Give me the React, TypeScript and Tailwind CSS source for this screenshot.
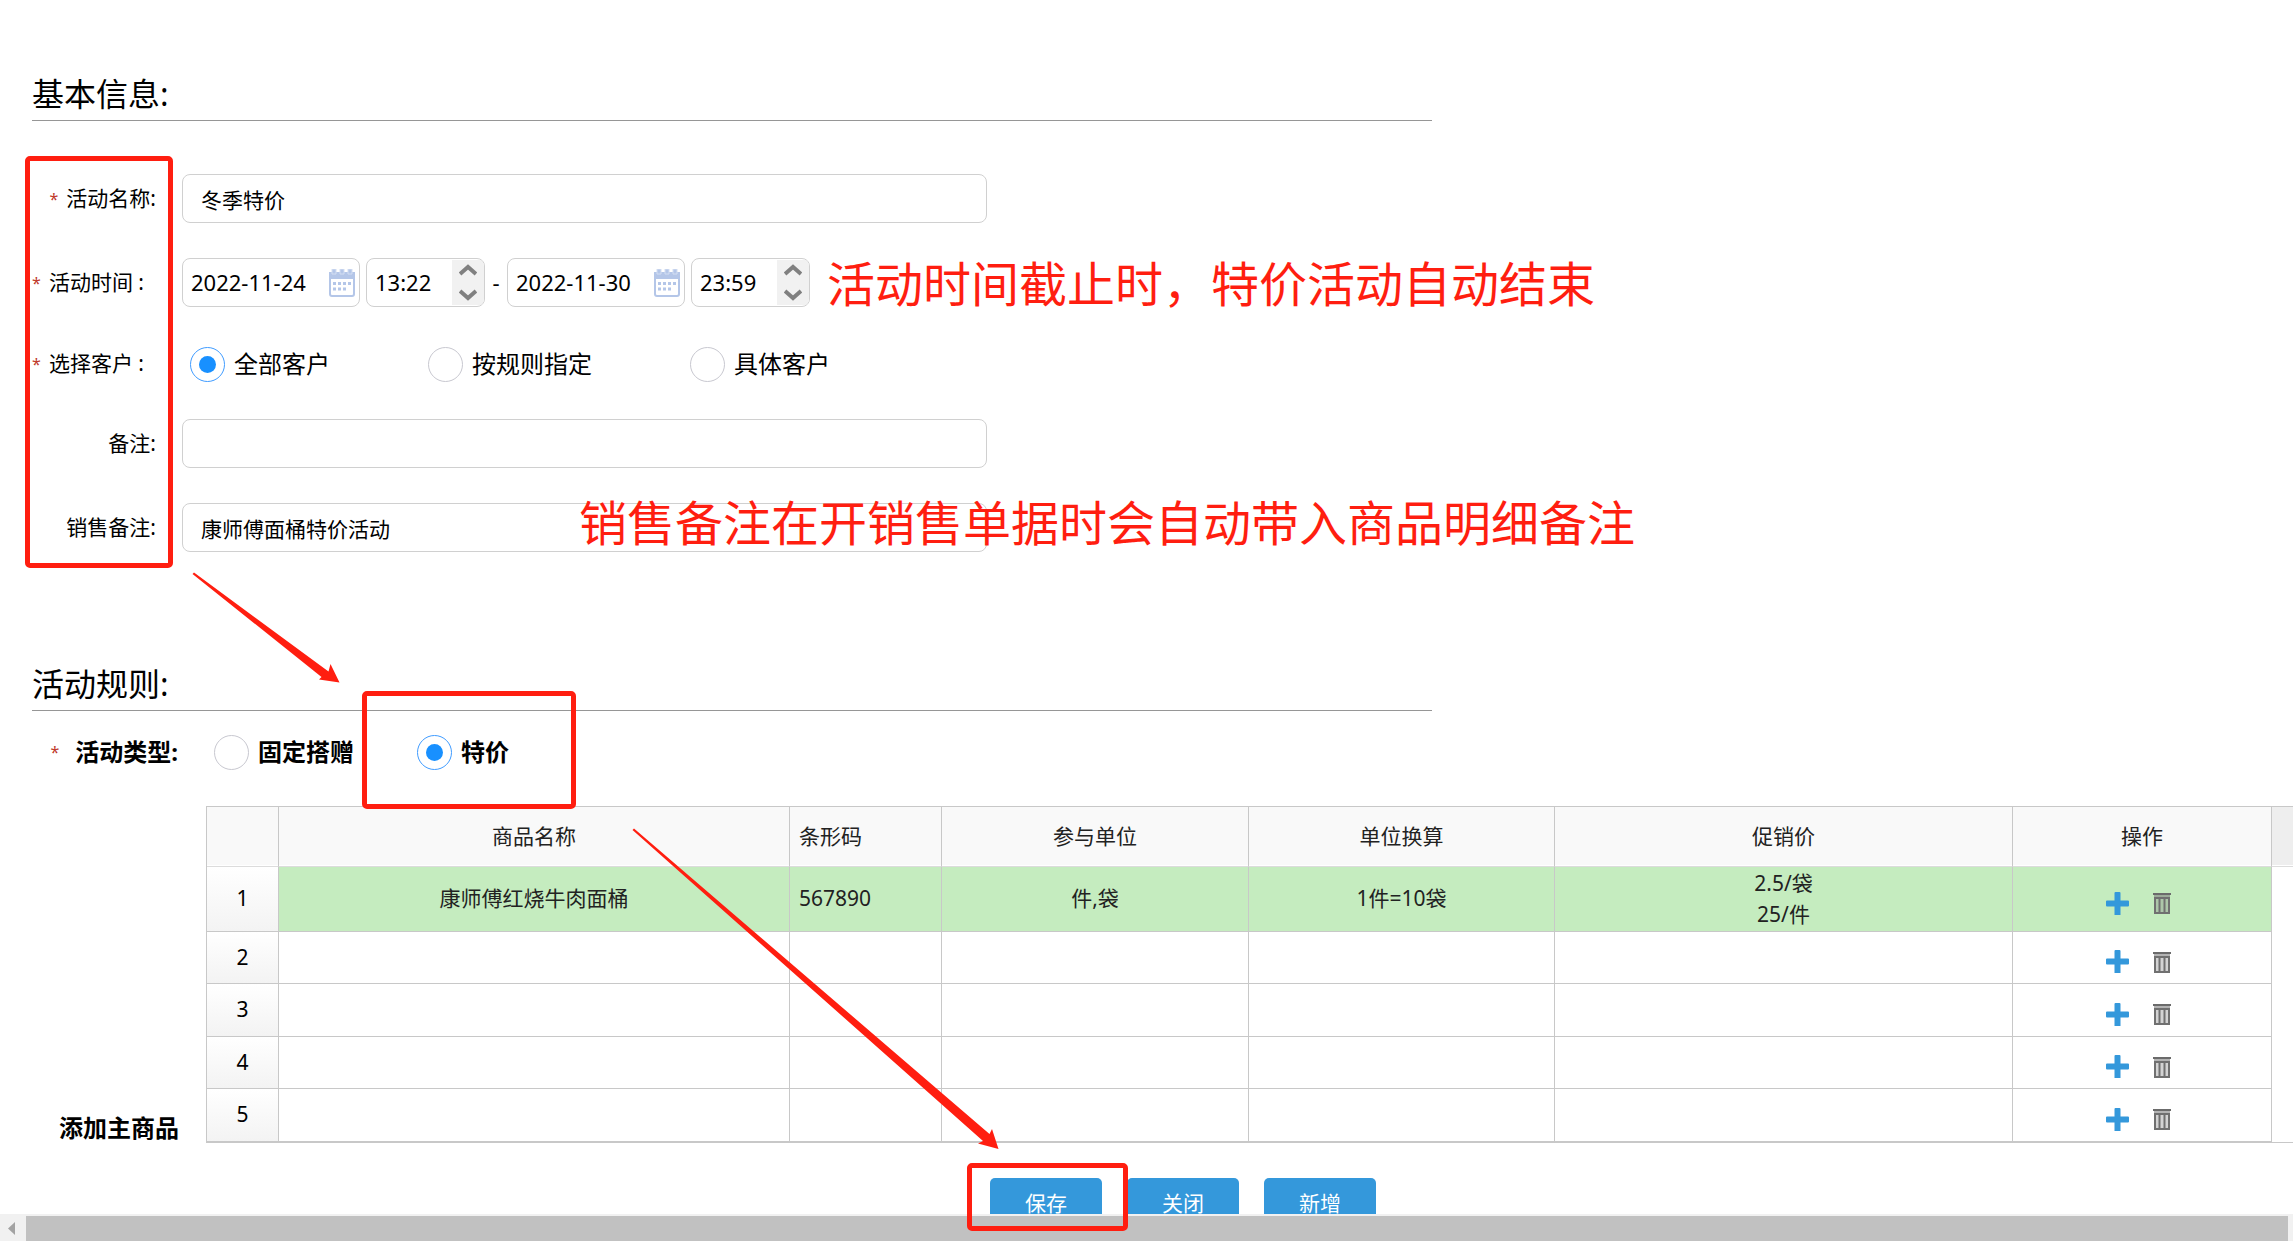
import React, { useState } from 'react';

const customerOptions = ['全部客户', '按规则指定', '具体客户'];

const rows = [
  { name: '康师傅红烧牛肉面桶', barcode: '567890', units: '件,袋', conversion: '1件=10袋', prices: ['2.5/袋', '25/件'] },
  { name: '', barcode: '', units: '', conversion: '', prices: [] },
  { name: '', barcode: '', units: '', conversion: '', prices: [] },
  { name: '', barcode: '', units: '', conversion: '', prices: [] },
  { name: '', barcode: '', units: '', conversion: '', prices: [] },
];

const fieldClass = 'h-[49px] rounded-lg border border-[#d0d0d0] bg-white outline-none';
const radioClass =
  'grid size-[35px] shrink-0 appearance-none place-items-center rounded-full border border-[#c8c8d0] bg-white before:size-[17px] before:rounded-full checked:border-[#409cff] checked:before:bg-[#1890ff]';
const headClass = 'border-r border-b border-r-[#c8c8c8] border-b-[#dcdcdc] font-normal shadow-[inset_0_-1px_0_#fff]';
const cellClass = 'border-r border-b border-[#c8c8c8] p-0 text-center';

const Star = () => <span className="pr-2 text-base text-[#c0392b]">*</span>;

const SectionTitle = ({ children }: { children: React.ReactNode }) => (
  <h2 className="ml-8 h-[51px] max-w-[1400px] border-b border-[#969696] text-[32px] leading-[48px]">{children}</h2>
);

const FieldLabel = ({ id, text, required }: { id: string; text: string; required?: boolean }) => (
  <label htmlFor={id} className="flex w-[182px] shrink-0 items-center justify-end pr-[26px]">
    {required && <Star />}
    {text}
  </label>
);

const CalendarIcon = () => (
  <svg width="26" height="28" viewBox="0 0 26 28">
    <rect x="1" y="5" width="24" height="22" rx="2" fill="#fff" stroke="#b4c6e8" strokeWidth="2" />
    <path d="M0 3h26v7H0z" fill="#b4c6e8" />
    <path d="M3 0h4v5H3zM11 0h4v5h-4zM19 0h4v5h-4z" fill="#b4c6e8" stroke="#d3def2" />
    <path d="M4 14.500h18" stroke="#b4c6e8" strokeWidth="3" strokeDasharray="3 2" />
    <path d="M4 20h14" stroke="#b4c6e8" strokeWidth="3" strokeDasharray="3 2" />
  </svg>
);

const DateField = ({ label, value }: { label: string; value: string }) => (
  <div className={`${fieldClass} flex w-[178px] items-center justify-between pr-1 pl-2`}>
    <input aria-label={label} defaultValue={value} className="w-32 text-[22px] outline-none" />
    <button type="button" aria-label={`${label}日历`}>
      <CalendarIcon />
    </button>
  </div>
);

const TimeField = ({ label, value }: { label: string; value: string }) => (
  <div className={`${fieldClass} flex w-[119px] items-center justify-between overflow-hidden pl-2`}>
    <input aria-label={label} defaultValue={value} className="w-16 text-[22px] outline-none" />
    <div className="my-px flex w-8 flex-col items-center justify-between self-stretch bg-[#f1f1f1] py-1">
      <button type="button" aria-label={`${label}增加`}>
        <svg width="18" height="12" viewBox="0 0 18 12">
          <path d="M1 10 9 3l8 7" fill="none" stroke="#808080" strokeWidth="4" />
        </svg>
      </button>
      <button type="button" aria-label={`${label}减少`}>
        <svg width="18" height="12" viewBox="0 0 18 12">
          <path d="M1 2l8 7 8-7" fill="none" stroke="#808080" strokeWidth="4" />
        </svg>
      </button>
    </div>
  </div>
);

const PlusIcon = () => (
  <svg width="23" height="23" viewBox="0 0 23 23">
    <path d="M8.500 1q0-1 1-1h4q1 0 1 1v7.500H22q1 0 1 1v4q0 1-1 1h-7.500V23h-6v-8.500H1q-1 0-1-1v-4q0-1 1-1h7.500z" fill="#3498db" />
  </svg>
);

const TrashIcon = () => (
  <svg width="18" height="22" viewBox="0 0 18 22">
    <path d="M1 2h16v3H1z" fill="#808080" fillOpacity=".6" />
    <path d="M0 1h18v2H0z" fill="#6b6b6b" />
    <path d="M2 6h14v15H2z" fill="#808080" fillOpacity=".35" stroke="#707070" strokeWidth="2" />
    <path d="M6.500 6v15M11.500 6v15" stroke="#707070" strokeWidth="2" />
  </svg>
);

const Annotations = () => (
  <div className="pointer-events-none absolute inset-0 overflow-hidden text-[48px] leading-[72px] whitespace-nowrap text-[#ff1e10]">
    <div className="absolute top-[156px] left-[25px] h-[412px] w-[148px] rounded-[5px] border-5 border-[#ff1e10]" />
    <div className="absolute top-[691px] left-[362px] h-[118px] w-[214px] rounded-[5px] border-5 border-[#ff1e10]" />
    <div className="absolute top-[1163px] left-[967px] h-[68px] w-[161px] rounded-[5px] border-5 border-[#ff1e10]" />
    <p className="absolute top-[248px] left-[827px]">活动时间截止时，特价活动自动结束</p>
    <p className="absolute top-[487px] left-[579px]">销售备注在开销售单据时会自动带入商品明细备注</p>
    <svg className="absolute top-[572px] left-[192px]" width="150" height="112" viewBox="192 572 150 112">
      <path d="M192.500 574 194 572.500 328.500 671.500 330.500 664 339.500 682.500 319 679.500 321.500 677z" fill="#ff1e10" />
    </svg>
    <svg className="absolute top-[828px] left-[632px]" width="368" height="323" viewBox="632 828 368 323">
      <path d="M632.500 830 634 828.500 989.500 1134 992 1129 998.500 1149 978 1143.500 983 1141z" fill="#ff1e10" />
    </svg>
  </div>
);

const App = () => {
  const [customer, setCustomer] = useState('全部客户');
  const [activityType, setActivityType] = useState('特价');

  return (
    <div className="relative flex h-screen flex-col overflow-hidden bg-white font-['Noto_Sans','Noto_Sans_CJK_SC',sans-serif] text-[21px] text-black">
      <main className="min-h-0 flex-1 overflow-hidden pt-[70px]">
        <SectionTitle>基本信息:</SectionTitle>

        <div className="mt-[53px] flex flex-col gap-[35px]">
          <div className="flex">
            <FieldLabel id="name" text="活动名称:" required />
            <input id="name" defaultValue="冬季特价" className={`${fieldClass} w-[805px] px-[18px]`} />
          </div>

          <div className="flex items-center">
            <div className="flex w-[182px] shrink-0 items-center justify-end pr-[38px]">
              <Star />
              活动时间 :
            </div>
            <div className="flex items-center gap-1.5">
              <DateField label="开始日期" value="2022-11-24" />
              <TimeField label="开始时间" value="13:22" />
              <span className="w-[10px] text-center text-[22px]">-</span>
              <DateField label="结束日期" value="2022-11-30" />
              <TimeField label="结束时间" value="23:59" />
            </div>
          </div>

          <div className="flex h-[42px] items-center pt-0.5">
            <div className="flex w-[182px] shrink-0 items-center justify-end pr-[38px]">
              <Star />
              选择客户 :
            </div>
            <div className="flex gap-[98px] pl-2 text-2xl">
              {customerOptions.map((option) => (
                <label key={option} className="flex items-center gap-[9px]">
                  <input
                    type="radio"
                    name="customer"
                    checked={customer === option}
                    onChange={() => setCustomer(option)}
                    className={radioClass}
                  />
                  {option}
                </label>
              ))}
            </div>
          </div>

          <div className="flex">
            <FieldLabel id="remark" text="备注:" />
            <input id="remark" className={`${fieldClass} w-[805px] px-[18px]`} />
          </div>

          <div className="flex">
            <FieldLabel id="saleRemark" text="销售备注:" />
            <input id="saleRemark" defaultValue="康师傅面桶特价活动" className={`${fieldClass} w-[805px] px-[18px]`} />
          </div>
        </div>

        <div className="mt-[108px]">
          <SectionTitle>活动规则:</SectionTitle>
        </div>

        <div className="mb-[13px] flex h-[82px] items-center text-2xl font-bold">
          <div className="flex w-[182px] items-center justify-end pr-1">
            <span className="pr-4 text-base font-normal text-[#c0392b]">*</span>
            活动类型:
          </div>
          <div className="flex gap-[63px] pl-8">
            {['固定搭赠', '特价'].map((type) => (
              <label key={type} className="flex items-center gap-[9px]">
                <input
                  type="radio"
                  name="activityType"
                  checked={activityType === type}
                  onChange={() => setActivityType(type)}
                  className={radioClass}
                />
                {type}
              </label>
            ))}
          </div>
        </div>

        <div className="flex items-end">
          <div className="w-[206px] shrink-0 pr-[27px] text-right text-2xl leading-[30px] font-bold">添加主商品</div>
          <div className="min-w-0 flex-1 border-y border-l border-[#c8c8c8]">
            <table className="w-full table-fixed border-separate border-spacing-0 text-[#222]">
              <colgroup>
                <col className="w-[72px]" />
                <col />
                <col className="w-[152px]" />
                <col className="w-[307px]" />
                <col className="w-[306px]" />
                <col className="w-[458px]" />
                <col className="w-[259px]" />
                <col className="w-[21px]" />
              </colgroup>
              <thead>
                <tr className="h-[60px] bg-[#f9f9f9]">
                  <th className={headClass} />
                  <th className={headClass}>商品名称</th>
                  <th className={`${headClass} pl-[9px] text-left`}>条形码</th>
                  <th className={headClass}>参与单位</th>
                  <th className={headClass}>单位换算</th>
                  <th className={headClass}>促销价</th>
                  <th className={headClass}>操作</th>
                  <th className="border-b border-[#dcdcdc] bg-[#eee] shadow-[inset_0_-1px_0_#fff]" />
                </tr>
              </thead>
              <tbody>
                {rows.map((row, index) => (
                  <tr key={index} className={`group ${row.name ? 'h-[65px]' : 'odd:h-[53px] even:h-[52px]'}`}>
                    <td className={`${cellClass} bg-linear-to-b from-white to-[#f3f3f3] text-black`}>{index + 1}</td>
                    <td className={`${cellClass} group-first:bg-[#c5ecbf]`}>{row.name}</td>
                    <td className={`${cellClass} group-first:bg-[#c5ecbf]`}>
                      <div className="pl-[9px] text-left">{row.barcode}</div>
                    </td>
                    <td className={`${cellClass} group-first:bg-[#c5ecbf]`}>{row.units}</td>
                    <td className={`${cellClass} group-first:bg-[#c5ecbf]`}>{row.conversion}</td>
                    <td className={`${cellClass} leading-[31px] group-first:bg-[#c5ecbf]`}>
                      {row.prices.map((price) => (
                        <div key={price}>{price}</div>
                      ))}
                    </td>
                    <td className={`${cellClass} group-first:bg-[#c5ecbf]`}>
                      <div className="flex items-center justify-center gap-6 pt-2 pr-2">
                        <button type="button" aria-label="添加">
                          <PlusIcon />
                        </button>
                        <button type="button" aria-label="删除">
                          <TrashIcon />
                        </button>
                      </div>
                    </td>
                    <td className="p-0" />
                  </tr>
                ))}
              </tbody>
            </table>
          </div>
        </div>

        <div className="mt-[35px] flex justify-center gap-[25px] pl-[73px]">
          {['保存', '关闭', '新增'].map((action) => (
            <button key={action} type="button" className="h-[52px] w-28 rounded-[5px] bg-[#3498db] text-white">
              {action}
            </button>
          ))}
        </div>
      </main>

      <div className="flex h-[27px] shrink-0 bg-[#f1f1f1] pt-0.5 pr-[5px]">
        <div className="flex w-[26px] items-center justify-center pr-1">
          <svg width="7" height="13" viewBox="0 0 7 13">
            <path d="M7 0v13L0 6.500z" fill="#a3a3a3" />
          </svg>
        </div>
        <div className="flex-1 bg-[#c1c1c1]" />
      </div>

      <Annotations />
    </div>
  );
};

export default App;
